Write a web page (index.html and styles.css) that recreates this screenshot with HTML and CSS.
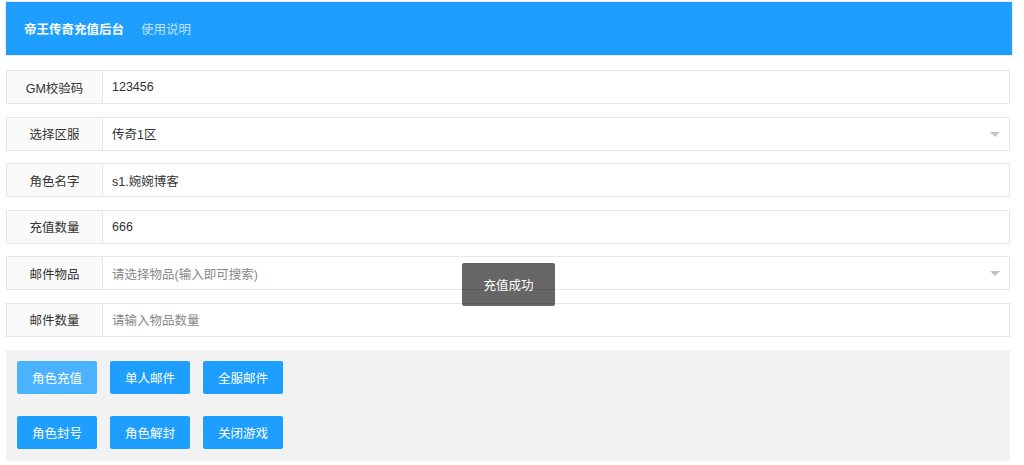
FILE: index.html
```html
<!DOCTYPE html>
<html lang="zh">
<head>
<meta charset="utf-8">
<title>帝王传奇充值后台</title>
<link rel="stylesheet" href="styles.css">
</head>
<body>
<div class="page">
  <div class="header">
    <span class="brand">帝王传奇充值后台</span>
    <span class="nav">使用说明</span>
  </div>
  <div class="form">
    <div class="row">
      <div class="label">GM校验码</div>
      <div class="field">123456</div>
    </div>
    <div class="row">
      <div class="label">选择区服</div>
      <div class="field select">传奇1区<i class="edge"></i></div>
    </div>
    <div class="row">
      <div class="label">角色名字</div>
      <div class="field">s1.婉婉博客</div>
    </div>
    <div class="row">
      <div class="label">充值数量</div>
      <div class="field">666</div>
    </div>
    <div class="row">
      <div class="label">邮件物品</div>
      <div class="field select placeholder">请选择物品(输入即可搜索)<i class="edge"></i></div>
    </div>
    <div class="row">
      <div class="label">邮件数量</div>
      <div class="field placeholder">请输入物品数量</div>
    </div>
    <div class="panel">
      <div class="btns">
        <span class="btn hover">角色充值</span>
        <span class="btn">单人邮件</span>
        <span class="btn">全服邮件</span>
      </div>
      <div class="btns">
        <span class="btn">角色封号</span>
        <span class="btn">角色解封</span>
        <span class="btn">关闭游戏</span>
      </div>
    </div>
  </div>
  <div class="toast">充值成功</div>
</div>
</body>
</html>
```

FILE: styles.css
```css
* { box-sizing: border-box; }
html, body { margin: 0; background: #fff; }
body {
  font-family: "Liberation Sans", "Noto Sans CJK SC", sans-serif;
  font-size: 12.5px;
  color: #333;
}
.page {
  position: relative;
  padding: 2px 0 0 6px;
  width: 1012px;
}
.header {
  height: 53px;
  background: #1E9FFF;
  display: flex;
  align-items: center;
  padding-left: 18px;
  box-shadow: 0 0 1px 1px #eaeaea;
}
.brand {
  color: #fff;
  font-weight: bold;
  font-size: 12.5px;
}
.nav {
  margin-left: 17px;
  color: rgba(255,255,255,0.72);
  font-size: 12.5px;
}
.form {
  width: 1004px;
  margin-top: 15px;
}
.row {
  display: flex;
  height: 34px;
  margin-bottom: 12.6px;
}
.label {
  width: 96px;
  flex: none;
  background: #fafafa;
  border: 1px solid #e6e6e6;
  border-right: none;
  display: flex;
  align-items: center;
  justify-content: center;
  color: #333;
}
.field {
  flex: 1;
  border: 1px solid #e6e6e6;
  display: flex;
  align-items: center;
  padding-left: 9px;
  position: relative;
  color: #333;
}
.field.placeholder { color: #888; }
.edge {
  position: absolute;
  right: 9px;
  top: 14px;
  width: 0;
  height: 0;
  border-left: 5.5px solid transparent;
  border-right: 5.5px solid transparent;
  border-top: 5.5px solid #c2c2c2;
}
.panel {
  margin-top: 0.4px;
  background: #f2f2f2;
  padding: 11px 11px 12px;
  display: flex;
  flex-direction: column;
  gap: 22px;
}
.btns {
  display: flex;
  gap: 13px;
}
.btn {
  width: 80px;
  height: 33px;
  background: #1E9FFF;
  color: #fff;
  border-radius: 2px;
  display: flex;
  align-items: center;
  justify-content: center;
  font-size: 12.5px;
}
.btn.hover { background: #4bb2ff; }
.toast {
  position: absolute;
  left: 462px;
  top: 263px;
  width: 93px;
  height: 43px;
  background: rgba(0,0,0,0.6);
  color: #fff;
  border-radius: 2px;
  display: flex;
  align-items: center;
  justify-content: center;
  font-size: 12.5px;
}
```
